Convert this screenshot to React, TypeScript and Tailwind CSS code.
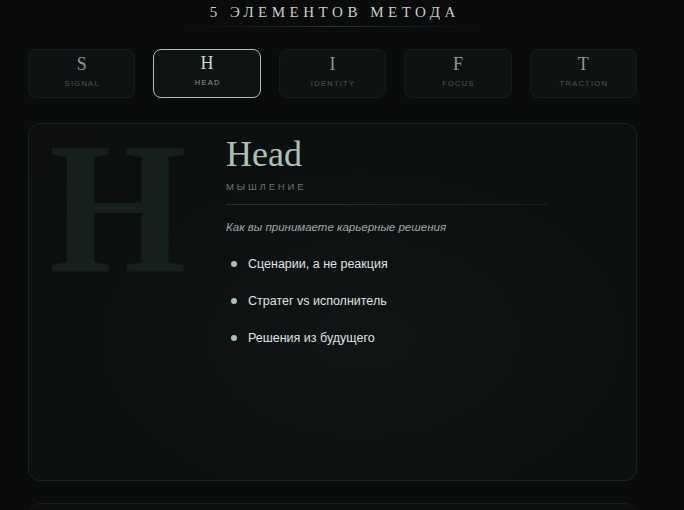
const TABS = [
  { letter: 'S', label: 'Signal' },
  { letter: 'H', label: 'Head' },
  { letter: 'I', label: 'Identity' },
  { letter: 'F', label: 'Focus' },
  { letter: 'T', label: 'Traction' },
];

const POINTS = ['Сценарии, а не реакция', 'Стратег vs исполнитель', 'Решения из будущего'];

export default function App() {
  const active = 1;

  return (
    <div className="h-[510px] w-full overflow-hidden bg-[#0a0b0c] font-['Liberation_Sans',Arial,sans-serif]">
      <div className="ml-[28px] w-[609px]">
        {/* section title */}
        <div className="flex flex-col items-center pt-[2px]">
          <h2 className="pl-[0.3em] font-['Liberation_Serif',serif] text-[15px] uppercase leading-[20px] tracking-[0.3em] text-[#c9cecb]">
            5 элементов метода
          </h2>
          <div className="mt-[4px] h-px w-[288px] bg-gradient-to-r from-transparent via-[#2e3432] to-transparent" />
        </div>

        {/* tabs */}
        <div className="mt-[22px] grid grid-cols-5 gap-[18px]">
          {TABS.map((t, i) => {
            const on = i === active;
            return (
              <button
                key={t.letter}
                className={
                  on
                    ? 'flex h-[49px] flex-col items-center rounded-[8px] border-[1.5px] border-[#a9c1b3] bg-[#0f1413] pt-[4px]'
                    : 'flex h-[49px] flex-col items-center rounded-[8px] border border-[#181d1c] bg-[#0f1212] pt-[5px]'
                }
              >
                <span
                  className={
                    'font-["Liberation_Serif",serif] text-[18px] leading-[18px] ' +
                    (on ? 'text-[#c3d6c9]' : 'text-[#8f9793]')
                  }
                >
                  {t.letter}
                </span>
                <span
                  className={
                    'mt-[6px] pl-[0.15em] text-[7.5px] uppercase leading-[10px] tracking-[0.17em] ' +
                    (on ? 'text-[#8c9b93]' : 'text-[#4f5654]')
                  }
                >
                  {t.label}
                </span>
              </button>
            );
          })}
        </div>

        {/* detail card */}
        <div className="mt-[25px] flex h-[358px] rounded-[12px] border border-[#1d2321] bg-[radial-gradient(ellipse_at_55%_60%,#111516_0%,#0d1011_55%,#0c0e0f_100%)]">
          <div className="w-[197px] shrink-0 pl-[20px] pt-[15px]">
            <span className="block h-[139px] origin-left scale-x-[0.94] select-none font-['Liberation_Serif',serif] text-[188px] font-bold leading-[139px] text-[#151f1e]">
              H
            </span>
          </div>

          <div className="flex-1 pt-[12px]">
            <h3 className="font-['Liberation_Serif',serif] text-[36px] leading-[36px] text-[#a9c3b1]">Head</h3>
            <div className="mt-[9px] text-[9.5px] uppercase leading-[12px] tracking-[0.3em] text-[#6b7270]">
              Мышление
            </div>
            <div className="mt-[11px] h-px w-[322px] bg-gradient-to-r from-[#2a302e] via-[#262c2a] to-[#1a1f1e]" />
            <p className="mt-[15px] text-[11.5px] italic leading-[14px] text-[#a2a8a5]">
              Как вы принимаете карьерные решения
            </p>
            <ul className="mt-[22px] flex flex-col gap-[21px]">
              {POINTS.map((p) => (
                <li key={p} className="flex items-center gap-[11px] pl-[5px] text-[12.5px] leading-[16px] text-[#dfe3e0]">
                  <span className="h-[6px] w-[6px] shrink-0 rounded-full bg-[#a9c3b1]" />
                  {p}
                </li>
              ))}
            </ul>
          </div>
        </div>

        {/* next card, cut off by the window */}
        <div className="mt-[22px] h-[60px] rounded-[12px] border border-[#191e1d] bg-[#0c0e0f]" />
      </div>
    </div>
  );
}
